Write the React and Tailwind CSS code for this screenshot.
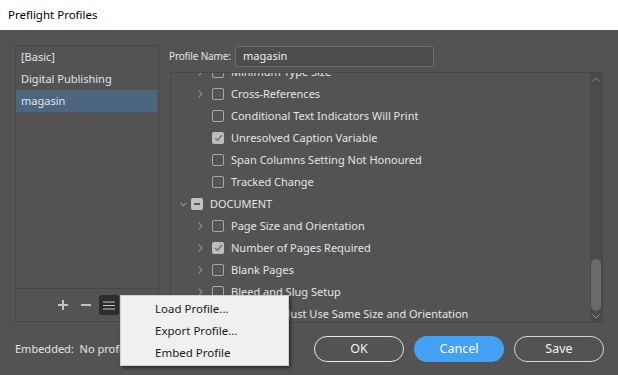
import React from "react";

const F = { fontFamily: '"Noto Sans", "Open Sans", sans-serif' };

function Chevron({ down }) {
  if (down) {
    return (
      <svg width="7" height="5" viewBox="0 0 7 5" className="block">
        <path d="M0.5 0.8 L3.5 3.8 L6.5 0.8" fill="none" stroke="#9a9a9a" strokeWidth="1.1" />
      </svg>
    );
  }
  return (
    <svg width="5" height="8" viewBox="0 0 5 8" className="block">
      <path d="M0.8 0.5 L4 4 L0.8 7.5" fill="none" stroke="#9a9a9a" strokeWidth="1.1" />
    </svg>
  );
}

function Box({ state }) {
  if (state === "checked") {
    return (
      <div className="w-[12px] h-[12px] rounded-[2px] bg-[#bdbdbd] flex items-center justify-center shrink-0">
        <svg width="9" height="8" viewBox="0 0 9 8">
          <path d="M1.2 4.2 L3.5 6.3 L7.8 1.3" fill="none" stroke="#707070" strokeWidth="1.4" />
        </svg>
      </div>
    );
  }
  if (state === "mixed") {
    return (
      <div className="w-[12px] h-[12px] rounded-[2px] bg-[#c2c2c2] flex items-center justify-center shrink-0">
        <div className="w-[6px] h-[2px] bg-[#555555]" />
      </div>
    );
  }
  return <div className="w-[12px] h-[12px] rounded-[2px] border border-[#a8a8a8] shrink-0" />;
}

function ChildRow({ label, chevron, state }) {
  return (
    <div className="h-[22px] flex items-center shrink-0">
      <div className="w-[41px] pl-[27px] flex items-center shrink-0">{chevron && <Chevron />}</div>
      <Box state={state} />
      <span className="ml-[7px] text-[11px] text-[#e4e4e4] whitespace-nowrap">{label}</span>
    </div>
  );
}

export default function App() {
  const rows = [
    { label: "Minimum Type Size", chevron: true },
    { label: "Cross-References", chevron: true },
    { label: "Conditional Text Indicators Will Print" },
    { label: "Unresolved Caption Variable", state: "checked" },
    { label: "Span Columns Setting Not Honoured" },
    { label: "Tracked Change" },
  ];
  const rows2 = [
    { label: "Page Size and Orientation", chevron: true },
    { label: "Number of Pages Required", chevron: true, state: "checked" },
    { label: "Blank Pages", chevron: true },
    { label: "Bleed and Slug Setup", chevron: true },
    { label: "All Pages Must Use Same Size and Orientation", chevron: true },
    { label: "Other", chevron: true },
  ];
  return (
    <div style={F} className="w-[618px] h-[375px] bg-[#535353] flex flex-col overflow-hidden">
      <div className="h-[30px] bg-white flex items-center pl-[8px] text-[11.5px] text-black shrink-0">
        Preflight Profiles
      </div>
      <div className="relative flex-1 flex flex-col px-[15px] pt-[15px]">
        <div className="flex h-[278px]">
          {/* left panel */}
          <div className="w-[144px] h-[277px] border border-[#474747] flex flex-col">
            <div className="flex-1 flex flex-col text-[11px] text-[#e4e4e4]">
              <div className="h-[22px] flex items-center pl-[5px]">[Basic]</div>
              <div className="h-[22px] flex items-center pl-[5px]">Digital Publishing</div>
              <div className="h-[22px] flex items-center pl-[5px] bg-[#4c6680]">magasin</div>
            </div>
            <div className="h-[33px] border-t border-[#474747] flex items-center pl-[41px]">
              <svg width="12" height="12" viewBox="0 0 12 12">
                <path d="M6 1 V11 M1 6 H11" stroke="#c4c4c4" strokeWidth="2" />
              </svg>
              <svg width="12" height="12" viewBox="0 0 12 12" className="ml-[11px]">
                <path d="M1 6 H11" stroke="#c4c4c4" strokeWidth="2" />
              </svg>
              <div className="ml-[7px] w-[20px] h-[20px] rounded-[3px] bg-[#2d2d2d] flex items-center justify-center">
                <svg width="12" height="9" viewBox="0 0 12 9">
                  <path d="M0 1 H12 M0 4.5 H12 M0 8 H12" stroke="#c8c8c8" strokeWidth="1.2" />
                </svg>
              </div>
            </div>
          </div>
          {/* right column */}
          <div className="ml-[11px] w-[433px] flex flex-col">
            <div className="h-[22px] flex items-center">
              <span className="text-[10px] tracking-[-0.15px] text-[#e4e4e4] w-[66px] -ml-[1px] whitespace-nowrap">Profile Name:</span>
              <div className="w-[199px] h-[21px] rounded-[3px] border border-[#6c6c6c] bg-[#4d4d4d] flex items-center pl-[7px] text-[11px] text-[#ededed]">
                magasin
              </div>
            </div>
            <div className="mt-[5px] h-[251px] border border-[#474747] flex overflow-hidden">
              <div className="flex-1 overflow-hidden">
                <div className="-mt-[12px] flex flex-col">
                  {rows.map((r) => (
                    <ChildRow key={r.label} {...r} />
                  ))}
                  <div className="h-[22px] flex items-center shrink-0">
                    <div className="w-[20px] pl-[9px] flex items-center shrink-0">
                      <Chevron down />
                    </div>
                    <Box state="mixed" />
                    <span className="ml-[7px] text-[11px] text-[#e4e4e4]">DOCUMENT</span>
                  </div>
                  {rows2.map((r) => (
                    <ChildRow key={r.label} {...r} />
                  ))}
                </div>
              </div>
              <div className="w-[12px] bg-[#4a4a4a] flex flex-col items-center justify-between py-[3px]">
                <svg width="8" height="5" viewBox="0 0 8 5" className="mt-[1px]">
                  <path d="M0.5 4.5 L4 1 L7.5 4.5" fill="none" stroke="#8a8a8a" strokeWidth="1" />
                </svg>
                <div className="flex flex-col items-center">
                  <div className="w-[10px] h-[52px] rounded-full bg-[#6a6a6a]" />
                  <svg width="8" height="5" viewBox="0 0 8 5" className="mt-[3px]">
                    <path d="M0.5 0.5 L4 4 L7.5 0.5" fill="none" stroke="#8a8a8a" strokeWidth="1" />
                  </svg>
                </div>
              </div>
            </div>
          </div>
        </div>
        <div className="mt-[13px] flex items-center">
          <span className="text-[11px] text-[#e4e4e4] whitespace-pre">Embedded:  No profile e</span>
          <div className="ml-auto flex gap-[10px] -mr-[1px]">
            <div className="w-[90px] h-[26px] rounded-full border-[1.5px] border-[#e6e6e6] flex items-center justify-center text-[12.5px] text-[#f2f2f2]">
              OK
            </div>
            <div className="w-[90px] h-[26px] rounded-full bg-[#44a0f2] flex items-center justify-center text-[12.5px] text-white">
              Cancel
            </div>
            <div className="w-[90px] h-[26px] rounded-full border border-[#d6d6d6] flex items-center justify-center text-[12.5px] text-[#f2f2f2]">
              Save
            </div>
          </div>
        </div>
        {/* dropdown menu */}
        <div className="absolute left-[120px] top-[265px] w-[169px] h-[71px] bg-[#f0f0f0] border border-[#cfcfcf] shadow-[2px_2px_3px_rgba(0,0,0,0.45)] flex flex-col pt-[2px] text-[11.5px] text-[#1a1a1a]">
          <div className="h-[22px] flex items-center pl-[34px]">Load Profile...</div>
          <div className="h-[22px] flex items-center pl-[34px]">Export Profile...</div>
          <div className="h-[22px] flex items-center pl-[34px]">Embed Profile</div>
        </div>
      </div>
    </div>
  );
}
